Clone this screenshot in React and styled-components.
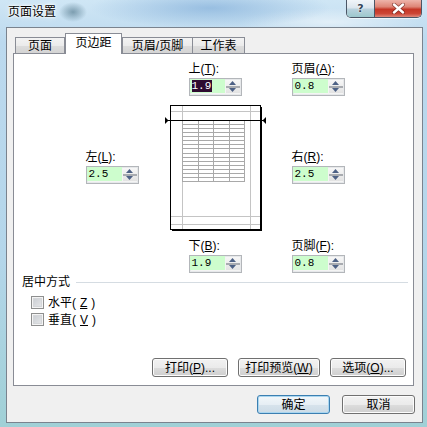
import React from 'react';
import styled, { createGlobalStyle } from 'styled-components';

const Global = createGlobalStyle`
  html, body { margin: 0; padding: 0; }
  body {
    width: 427px; height: 427px; overflow: hidden;
    font-family: "Liberation Sans", "Noto Sans CJK SC", sans-serif;
    font-size: 12px; color: #000;
  }
`;

const Frame = styled.div`
  width: 427px; height: 427px; box-sizing: border-box;
  display: flex; flex-direction: column;
  padding: 0 4px 4px 6px;
  background:
    radial-gradient(ellipse 14px 10px at 73px 12px, rgba(60,100,120,0.55), rgba(60,100,120,0) 100%),
    radial-gradient(ellipse 120px 20px at 210px 8px, rgba(110,160,210,0.55), rgba(110,160,210,0) 100%),
    radial-gradient(ellipse 90px 14px at 330px 22px, rgba(255,255,255,0.5), rgba(255,255,255,0) 100%),
    linear-gradient(180deg, #cfe6f5 0%, #bcd9ee 10%, #b4d6ea 60%, #a0d0d6 100%);
`;

const TitleBar = styled.div`
  height: 27px; flex: none;
  display: flex; align-items: flex-start;
`;

const Title = styled.div`
  margin: 5px 0 0 2px;
  line-height: 14px; font-size: 12px;
  text-shadow: 0 0 6px #fff, 0 0 3px #fff, 0 0 2px #fff;
`;

const CaptionButtons = styled.div`
  margin-left: auto; margin-right: 1px;
  display: flex; height: 17px;
  border: 1px solid #4b5666; border-top: none;
  border-radius: 0 0 5px 5px; overflow: hidden;
  box-shadow: 0 1px 0 rgba(255,255,255,0.6);
`;

const HelpButton = styled.div`
  width: 27px;
  border-right: 1px solid #4b5666;
  background: linear-gradient(180deg, #f1f5f9 0%, #dce6ee 45%, #b8d1dd 55%, #9cc8cd 100%);
  display: flex; align-items: center; justify-content: center;
  font-family: "DejaVu Sans", sans-serif; font-weight: bold; font-size: 11px;
  color: #34465a; text-shadow: 0 0 2px #fff, 0 0 1px #fff;
`;

const CloseButton = styled.div`
  width: 46px;
  background: linear-gradient(180deg, #eeb4aa 0%, #de8576 40%, #c53626 55%, #cc4636 80%, #e0897c 100%);
  display: flex; align-items: center; justify-content: center;
`;

const Client = styled.div`
  flex: 1;
  display: flex; flex-direction: column;
  border: 1px solid #7a838e;
  background: #f0f0f0;
  padding: 5px 8px 0 6px;
`;

const TabStrip = styled.div`
  height: 20px; display: flex; align-items: flex-end;
  padding-left: 2px;
`;

const Tab = styled.div`
  box-sizing: border-box;
  width: ${p => p.$w}px;
  height: ${p => (p.$active ? 21 : 16)}px;
  margin-bottom: ${p => (p.$active ? -1 : 0)}px;
  margin-left: ${p => (p.$overlap ? -1 : 0)}px;
  position: relative; z-index: ${p => (p.$active ? 2 : 1)};
  border: 1px solid #898c95; border-bottom: none;
  background: ${p => (p.$active ? '#fff' : 'linear-gradient(180deg, #f3f3f3 0%, #ebebeb 50%, #dddddd 51%, #d4d4d4 100%)')};
  text-align: center;
  padding-top: ${p => (p.$active ? 2 : 1)}px;
  line-height: 14px; font-size: 12px;
`;

const Panel = styled.div`
  box-sizing: border-box;
  width: 401px; height: 333px; flex: none;
  border: 1px solid #898c95; background: #fff;
  padding: 8px 5px 8px 8px;
  display: flex; flex-direction: column;
`;

const MarginGrid = styled.div`
  display: grid;
  grid-template-columns: 52px 25px 104px 25px 53px;
  grid-template-rows: auto auto auto;
  row-gap: 8px;
  justify-content: center;
`;

const Field = styled.div`
  grid-column: ${p => p.$col};
  grid-row: ${p => p.$row};
  margin-left: ${p => p.$indent || 0}px;
  margin-top: ${p => p.$top || 0}px;
  align-self: start;
  display: flex; flex-direction: column; gap: 2px;
`;

const Label = styled.div`
  line-height: 14px; font-size: 12px; white-space: nowrap;
  u { text-underline-offset: 1px; }
`;

const SpinBox = styled.div`
  box-sizing: border-box;
  width: 53px; height: 18px;
  border: 1px solid #b3b6ba;
  box-shadow: inset 0 0 0 1px #e6e8ea;
  background: #f4f4f4;
  display: flex; gap: 1px;
  padding: 0 1px 2px 0;
`;

const Value = styled.div`
  flex: 1;
  background: #cdfdcd;
  font-family: "Liberation Mono", monospace; font-size: 11px;
  line-height: 14px; padding-left: 2px;
  span { background: ${p => (p.$selected ? '#2e0b30' : 'transparent')}; color: ${p => (p.$selected ? '#fff' : '#000')}; padding: 0 1px 0 0; }
`;

const Spin = styled.div`
  width: 14px; margin-top: 1px;
  display: flex; flex-direction: column;
  background: linear-gradient(180deg, #f7f7f7, #e3e3e3);
`;

const SpinHalf = styled.div`
  flex: 1; display: flex; align-items: center; justify-content: center;
  border-${p => (p.$up ? 'bottom' : 'top')}: 1px solid #a8abb0;
`;

const PreviewBox = styled.div`
  grid-column: 3; grid-row: 2;
  margin-top: 1px;
  height: 126px;
`;

const GroupHeader = styled.div`
  margin-top: 2px;
  display: flex; align-items: center;
  line-height: 14px; font-size: 12px;
`;

const GroupLine = styled.div`
  flex: 1; height: 1px; margin-left: 6px;
  background: #d5dce2;
`;

const CheckList = styled.div`
  margin-top: 5px; padding-left: 9px;
  display: flex; flex-direction: column;
`;

const CheckRow = styled.label`
  display: flex; align-items: center; gap: 4px;
  height: 17px; font-size: 12px; line-height: 14px;
`;

const CheckBox = styled.span`
  box-sizing: border-box; width: 13px; height: 13px;
  border: 1px solid #8e8f8f;
  background: linear-gradient(135deg, #c6cacf 0%, #e9eaec 100%);
  box-shadow: inset 0 0 0 1px #f4f4f4, inset 0 0 0 2px #d4d6d9;
`;

const ButtonRow = styled.div`
  margin-top: auto;
  display: flex; justify-content: flex-end;
  gap: ${p => p.$gap}px;
  margin-right: ${p => p.$right}px;
`;

const Button = styled.div`
  box-sizing: border-box;
  width: ${p => p.$w}px; height: 19px;
  border: 1px solid ${p => (p.$default ? '#3c7fb1' : '#707070')};
  border-radius: 3px;
  background: ${p => (p.$default
    ? 'linear-gradient(180deg, #f2f7fa 0%, #e6eef4 50%, #d7e3ec 51%, #ccdbe6 100%)'
    : 'linear-gradient(180deg, #f2f2f2 0%, #ebebeb 50%, #dddddd 51%, #cfcfcf 100%)')};
  box-shadow: inset 0 0 0 1px ${p => (p.$default ? '#a9d6f0' : '#fcfcfc')};
  display: flex; align-items: center; justify-content: center;
  font-size: 12px; line-height: 14px; white-space: nowrap;
`;

const Footer = styled(ButtonRow)`
  margin-top: 9px;
`;

function SpinArrow({ up }) {
  return (
    <svg width="7" height="4" viewBox="0 0 7 4">
      <path d={up ? 'M3.5 0 L7 4 L0 4 Z' : 'M0 0 L7 0 L3.5 4 Z'} fill="#4d6185" />
    </svg>
  );
}

function Spinner({ value, selected }) {
  return (
    <SpinBox>
      <Value $selected={selected}><span>{value}</span></Value>
      <Spin>
        <SpinHalf $up><SpinArrow up /></SpinHalf>
        <SpinHalf><SpinArrow /></SpinHalf>
      </Spin>
    </SpinBox>
  );
}

function Preview() {
  const rows = [];
  for (let i = 1; i <= 15; i++) rows.push(Math.round(15 + i * 4.07));
  const cols = [19, 35, 50, 66, 81];
  return (
    <svg width="104" height="126" viewBox="0 0 104 126" shapeRendering="crispEdges">
      <g stroke="#c4c4c4" strokeWidth="1">
        <line x1="19.5" y1="1" x2="19.5" y2="124" />
        <line x1="87.5" y1="1" x2="87.5" y2="124" />
        <line x1="8" y1="6.5" x2="97" y2="6.5" />
        <line x1="8" y1="111.5" x2="97" y2="111.5" />
        <line x1="8" y1="119.5" x2="97" y2="119.5" />
      </g>
      <g stroke="#a9a9a9" strokeWidth="1">
        {rows.map(y => <line key={'r' + y} x1="19" y1={y + 0.5} x2="82" y2={y + 0.5} />)}
        {cols.map(x => <line key={'c' + x} x1={x + 0.5} y1="15" x2={x + 0.5} y2="77" />)}
      </g>
      <rect x="7.5" y="0.5" width="90" height="124" fill="none" stroke="#000" />
      <line x1="98.5" y1="2" x2="98.5" y2="126" stroke="#000" />
      <line x1="9" y1="125.5" x2="99" y2="125.5" stroke="#000" />
      <line x1="5" y1="15.5" x2="100" y2="15.5" stroke="#000" />
      <path d="M2 12 L2 19 L5.5 15.5 Z" fill="#000" shapeRendering="auto" />
      <path d="M103 12 L103 19 L99.5 15.5 Z" fill="#000" shapeRendering="auto" />
    </svg>
  );
}

function CloseGlyph() {
  return (
    <svg width="13" height="11" viewBox="0 0 13 11">
      <path d="M2 1.5 L11 9.5 M11 1.5 L2 9.5" stroke="#5a1a14" strokeWidth="4" strokeLinecap="round" opacity="0.6" />
      <path d="M2 1.5 L11 9.5 M11 1.5 L2 9.5" stroke="#fff" strokeWidth="2.4" strokeLinecap="round" />
    </svg>
  );
}

export default function App() {
  return (
    <>
      <Global />
      <Frame>
        <TitleBar>
          <Title>页面设置</Title>
          <CaptionButtons>
            <HelpButton>?</HelpButton>
            <CloseButton><CloseGlyph /></CloseButton>
          </CaptionButtons>
        </TitleBar>
        <Client>
          <TabStrip>
            <Tab $w={50}>页面</Tab>
            <Tab $w={57} $active>页边距</Tab>
            <Tab $w={71}>页眉/页脚</Tab>
            <Tab $w={53} $overlap>工作表</Tab>
          </TabStrip>
          <Panel>
            <MarginGrid>
              <Field $col={3} $row={1} $indent={26}>
                <Label>上(<u>T</u>):</Label>
                <Spinner value="1.9" selected />
              </Field>
              <Field $col={5} $row={1}>
                <Label>页眉(<u>A</u>):</Label>
                <Spinner value="0.8" />
              </Field>
              <Field $col={1} $row={2} $top={46}>
                <Label>左(<u>L</u>):</Label>
                <Spinner value="2.5" />
              </Field>
              <PreviewBox><Preview /></PreviewBox>
              <Field $col={5} $row={2} $top={46}>
                <Label>右(<u>R</u>):</Label>
                <Spinner value="2.5" />
              </Field>
              <Field $col={3} $row={3} $indent={26}>
                <Label>下(<u>B</u>):</Label>
                <Spinner value="1.9" />
              </Field>
              <Field $col={5} $row={3}>
                <Label>页脚(<u>F</u>):</Label>
                <Spinner value="0.8" />
              </Field>
            </MarginGrid>
            <GroupHeader>
              居中方式
              <GroupLine />
            </GroupHeader>
            <CheckList>
              <CheckRow><CheckBox />水平(<u>Z</u>)</CheckRow>
              <CheckRow><CheckBox />垂直(<u>V</u>)</CheckRow>
            </CheckList>
            <ButtonRow $gap={10} $right={2}>
              <Button $w={76}>打印(<u>P</u>)...</Button>
              <Button $w={82}>打印预览(<u>W</u>)</Button>
              <Button $w={76}>选项(<u>O</u>)...</Button>
            </ButtonRow>
          </Panel>
          <Footer $gap={12} $right={-1}>
            <Button $w={73} $default>确定</Button>
            <Button $w={73}>取消</Button>
          </Footer>
        </Client>
      </Frame>
    </>
  );
}
